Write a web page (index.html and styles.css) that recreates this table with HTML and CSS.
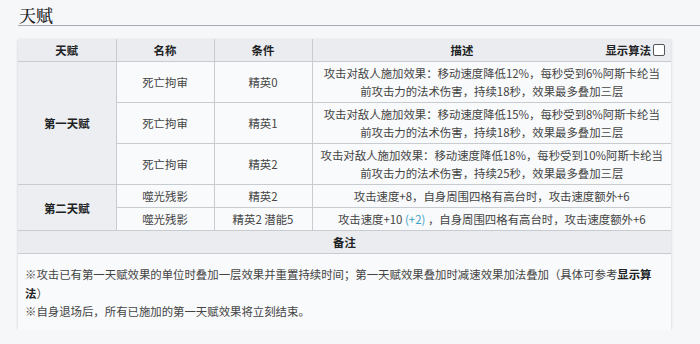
FILE: index.html
```html
<!DOCTYPE html>
<html lang="zh">
<head>
<meta charset="utf-8">
<link rel="stylesheet" href="styles.css">
</head>
<body>
<h2 class="title">天赋</h2>
<div class="card">
<table class="talent">
<colgroup><col class="c1"><col class="c2"><col class="c3"><col></colgroup>
<thead>
<tr><th>天赋</th><th>名称</th><th>条件</th><th class="desc-h"><span class="algo">显示算法<span class="cb"></span></span>描述</th></tr>
</thead>
<tbody>
<tr><th rowspan="3" class="group">第一天赋</th><td>死亡拘审</td><td>精英0</td><td>攻击对敌人施加效果：移动速度降低12%，每秒受到6%阿斯卡纶当<br>前攻击力的法术伤害，持续18秒，效果最多叠加三层</td></tr>
<tr><td>死亡拘审</td><td>精英1</td><td>攻击对敌人施加效果：移动速度降低15%，每秒受到8%阿斯卡纶当<br>前攻击力的法术伤害，持续18秒，效果最多叠加三层</td></tr>
<tr><td>死亡拘审</td><td>精英2</td><td>攻击对敌人施加效果：移动速度降低18%，每秒受到10%阿斯卡纶当<br>前攻击力的法术伤害，持续25秒，效果最多叠加三层</td></tr>
<tr><th rowspan="2" class="group">第二天赋</th><td>噬光残影</td><td>精英2</td><td>攻击速度+8，自身周围四格有高台时，攻击速度额外+6</td></tr>
<tr><td>噬光残影</td><td>精英2 潜能5</td><td>攻击速度+10 <span class="pot">(+2)</span> ，自身周围四格有高台时，攻击速度额外+6</td></tr>
<tr><th colspan="4">备注</th></tr>
<tr><td colspan="4" class="notes">※攻击已有第一天赋效果的单位时叠加一层效果并重置持续时间；第一天赋效果叠加时减速效果加法叠加（具体可参考<b>显示算<br>法</b>）<br>※自身退场后，所有已施加的第一天赋效果将立刻结束。</td></tr>
</tbody>
</table>
</div>
</body>
</html>
```

FILE: styles.css
```css
html, body {
  margin: 0;
  padding: 0;
  background: #f6f7f9;
}
body {
  font-family: "Noto Sans CJK SC", "Noto Sans", sans-serif;
  font-size: 11.4px;
  color: #444;
  overflow: hidden;
}
.title {
  margin: 0 0 13px 18px;
  padding: 4px 0 0 1px;
  font-family: "Noto Serif CJK SC", "Noto Sans CJK SC", serif;
  font-size: 17px;
  line-height: 21px;
  font-weight: 500;
  color: #202122;
  border-bottom: 1px solid #a2a9b1;
}
.card {
  margin-left: 18px;
  width: 653px;
  border-radius: 0 0 4px 4px;
  box-shadow: 0 1px 3px rgba(0,0,0,0.18);
  background: #f9fafb;
}
.talent {
  width: 100%;
  border-collapse: collapse;
  table-layout: fixed;
}
.c1, .c2, .c3 { width: 98px; }
.talent th, .talent td {
  border: 1px solid #c8ccd1;
  padding: 2px 6px;
  line-height: 18px;
  text-align: center;
  vertical-align: middle;
}
.talent tr > :first-child { border-left: none; }
.talent tr > :last-child { border-right: none; }
.talent thead th { border-top: none; }
.talent th {
  background: #eaecf0;
  color: #202122;
  font-weight: 700;
}
.talent td { background: #f9fafb; }
.talent .group { background: #eceef1; }
.algo {
  float: right;
  display: flex;
  align-items: center;
  gap: 1px;
}
.cb {
  display: inline-block;
  width: 10px;
  height: 10px;
  border: 1px solid #555;
  border-radius: 2px;
  background: #fff;
  margin-left: 1px;
}
.pot { color: #3aa3c4; }
.talent td.notes {
  text-align: left;
  padding: 11px 7px 9px;
  line-height: 18.5px;
  border-bottom: none;
}
.notes b { color: #202122; }
```
